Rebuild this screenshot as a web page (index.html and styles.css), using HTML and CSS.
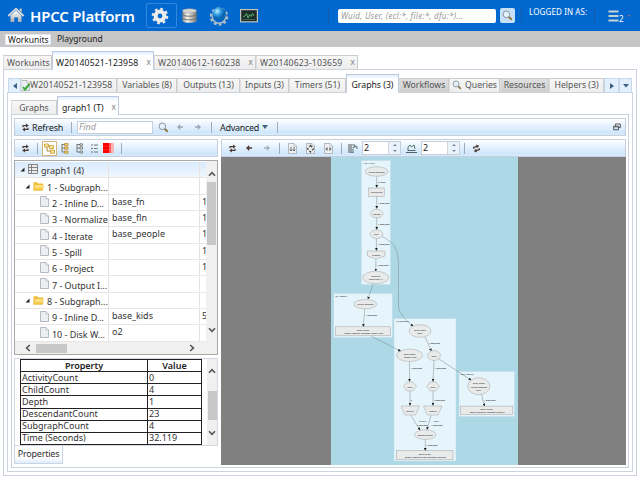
FILE: index.html
```
<!DOCTYPE html>
<html lang="en">
<head>
<meta charset="utf-8">
<title>HPCC Platform</title>
<link rel="stylesheet" href="styles.css">
</head>
<body>
<svg class="defs" width="0" height="0" aria-hidden="true">
  <defs>
    <linearGradient id="metal" x2="0" y2="1"><stop offset="0" stop-color="#fff"/><stop offset="1" stop-color="#a9adb0"/></linearGradient>
    <linearGradient id="cyl"><stop offset="0" stop-color="#888"/><stop offset=".35" stop-color="#f4f4f0"/><stop offset="1" stop-color="#777"/></linearGradient>
    <radialGradient id="ball" cx=".35" cy=".3"><stop offset="0" stop-color="#c5edff"/><stop offset=".5" stop-color="#3ba5e5"/><stop offset="1" stop-color="#0767b5"/></radialGradient>
    <linearGradient id="gold" x2="0" y2="1"><stop offset="0" stop-color="#fff0a0"/><stop offset="1" stop-color="#f3bd31"/></linearGradient>
    <marker id="arr" viewBox="0 0 4 4" refX="3.5" refY="2" markerWidth="2.8" markerHeight="2.8" markerUnits="userSpaceOnUse" orient="auto"><path d="M0 0L4 2L0 4z" fill="#222"/></marker>
    <symbol id="refresh" viewBox="0 0 9 9"><path d="M2 4.3V2.6H5.5M7 4.7V6.4H3.5" fill="none" stroke="#4b3a33" stroke-width="1.2"/><path d="M5 .6L7.8 2.6L5 4.4zM4 4.6L1.2 6.4L4 8.4z" fill="#4b3a33"/></symbol>
    <symbol id="lens" viewBox="0 0 11 11"><path d="M6.5 6.5L9.7 9.8" stroke="#8b7946" stroke-width="2"/><circle cx="4.4" cy="4.3" r="3.3" fill="#e3f0fb" stroke="#8b96a0"/></symbol>
    <symbol id="left" viewBox="0 0 8 8"><path d="M4.2 1L1 4L4.2 7V4.8H7V3.2H4.2z" fill="currentColor"/></symbol>
    <symbol id="right" viewBox="0 0 8 8"><path d="M3.8 1L7 4L3.8 7V4.8H1V3.2H3.8z" fill="currentColor"/></symbol>
    <symbol id="page" viewBox="0 0 9 11"><path d="M.5.5H6L8.5 3V10.5H.5z" fill="#eceef2" stroke="#a5abb2" stroke-width=".8"/><path d="M6 .5V3H8.5" fill="#fff" stroke="#a5abb2" stroke-width=".7"/></symbol>
    <symbol id="folder" viewBox="0 0 11 10"><path d="M.5 9V1.3H4.2L5.2 2.5H10V9z" fill="#f0bd3c"/><path d="M2 4H10.8L9.4 9.4H.5z" fill="url(#gold)" stroke="#eab640" stroke-width=".4"/></symbol>
    <symbol id="tri" viewBox="0 0 5 5"><path d="M4.5.5V4.5H.5z" fill="#222"/></symbol>
    <symbol id="up" viewBox="0 0 8 6"><path d="M1 4.8L4 1.6L7 4.8" fill="none" stroke="#555" stroke-width="1.6"/></symbol>
  </defs>
</svg>

<header class="top">
  <svg class="home" viewBox="0 0 17 17"><path d="M3 8.5L8.5 3.5L14 8.5V15H10.4V10.5H6.8V15H3z" fill="url(#metal)"/><path d="M.8 9L8.5 1.8L16.2 9" fill="none" stroke="#d7d7d7" stroke-width="1.8"/><path d="M12.2 1.5h2v4l-2-2z" fill="#ccc"/></svg>
  <h1>HPCC Platform</h1>
  <span class="gearbox"><svg width="18" height="18" viewBox="0 0 18 18"><circle cx="9" cy="9" r="7" fill="none" stroke="#e2e3e2" stroke-width="2.6" stroke-dasharray="2.75 2.75"/><circle cx="9" cy="9" r="4.4" fill="none" stroke="#ededeb" stroke-width="4"/></svg></span>
  <svg class="db" viewBox="0 0 17 17"><path d="M1 3v10.5c0 3 15 3 15 0V3z" fill="url(#cyl)"/><path d="M1 6.5c0 3 15 3 15 0M1 10.3c0 3 15 3 15 0" fill="none" stroke="#6f6f6b" stroke-width="1"/><ellipse cx="8.5" cy="3" rx="7.5" ry="2.3" fill="#d4d4d0" stroke="#999" stroke-width=".5"/></svg>
  <svg class="globe" viewBox="0 0 20 20"><circle cx="10" cy="10.5" r="8" fill="none" stroke="#aebbc4" stroke-width="2.6" stroke-dasharray="2.8 2.2"/><circle cx="10" cy="10.5" r="6.7" fill="none" stroke="#aebbc4" stroke-width="1.6"/><circle cx="10.2" cy="8" r="6.8" fill="url(#ball)"/></svg>
  <svg class="mon" viewBox="0 0 18 14"><rect x=".6" y=".6" width="16.8" height="12.2" fill="#1d2d29" stroke="#c2c4bd" stroke-width="1.2"/><path d="M3 8L5 7L6.5 4.5L8 9L9.5 5.5L11 7.5L12.5 4.5L14 7" fill="none" stroke="#5bbd73" stroke-width=".9"/><path d="M2.5 10.5H15" stroke="#64817a" stroke-width=".6"/></svg>
  <i class="hsep s1"></i>
  <span class="search">Wuid, User, (ecl:*, file:*, dfu:*)...</span>
  <span class="sbtn"><svg width="11" height="11"><use href="#lens"/></svg></span>
  <i class="hsep"></i>
  <span class="login">LOGGED IN AS:</span>
  <i class="hsep s3"></i>
  <svg class="burger" viewBox="0 0 11 12"><path d="M.5 1.5H10.5M.5 6H10.5M.5 10.5H10.5" stroke="#c9d2d8" stroke-width="2"/></svg>
  <span class="two">2</span><i class="caret"></i>
</header>
<nav class="subnav"><span class="on">Workunits</span><span>Playground</span></nav>

<div class="tabs t1">
  <span class="tab w48">Workunits</span>
  <span class="tab act w102">W20140521-123958<b>x</b></span>
  <span class="tab w102">W20140612-160238<b>x</b></span>
  <span class="tab w102">W20140623-103659<b>x</b></span>
</div>
<main class="frame f1">
  <div class="tabs t2">
    <span class="scroll w13"><svg width="4" height="6"><path d="M4 0V6L0 3z"/></svg></span>
    <span class="tab w96 wu"><svg width="9" height="11" viewBox="0 0 9 11"><use href="#page"/><path d="M2 7L4 9.5L8.5 4" fill="none" stroke="#34aa37" stroke-width="2"/></svg>W20140521-123958</span>
    <span class="tab w60">Variables (8)</span>
    <span class="tab w63">Outputs (13)</span>
    <span class="tab w49">Inputs (3)</span>
    <span class="tab w57">Timers (51)</span>
    <span class="tab act w53">Graphs (3)</span>
    <span class="tab dim w50">Workflows</span>
    <span class="tab w51"><svg class="ql" width="10" height="10"><use href="#lens"/></svg>Queries</span>
    <span class="tab dim w49">Resources</span>
    <span class="tab w55">Helpers (3)</span>
    <span class="scroll w15"><svg width="4" height="6"><path d="M0 0V6L4 3z"/></svg></span>
    <span class="scroll w13"><svg width="6" height="4"><path d="M0 0H6L3 3.5z"/></svg></span>
  </div>
  <div class="frame f2">
    <div class="tabs t3">
      <span class="tab w45">Graphs</span>
      <span class="tab act w62">graph1 (T)<b>x</b></span>
    </div>
    <div class="frame f3">
      <div class="bar main">
        <svg class="rf" width="9" height="9"><use href="#refresh"/></svg><span class="refresh">Refresh</span><i class="sep"></i>
        <span class="find">Find</span>
        <svg class="fl" width="11" height="11"><use href="#lens"/></svg>
        <svg class="al" width="8" height="8"><use href="#left"/></svg>
        <svg class="ar" width="8" height="8"><use href="#right"/></svg>
        <i class="sep"></i><span class="adv">Advanced</span><svg class="down" width="6" height="4"><path d="M0 0H6L3 4z"/></svg><i class="sep"></i>
        <svg class="win" width="8" height="8" viewBox="0 0 8 8"><path d="M2.5 2.8V1H7.3V4.5H5.8M.7 3.2H5.5V6.8H.7zM.7 3.8H5.5" fill="none" stroke="#555" stroke-width="1"/></svg>
      </div>
      <div class="cols">
        <section class="leftcol">
          <div class="bar lt">
            <svg class="rf" width="9" height="9"><use href="#refresh"/></svg><i class="sep"></i>
            <span class="sel"><svg width="11" height="11" viewBox="0 0 11 11"><path d="M3 3V8H7M3 3H6" fill="none" stroke="#aa8540"/><path d="M.5 1h4v3h-4zM5.5 2.5h4v3h-4zM6.5 7h4v3.3h-4z" fill="#ffe48a" stroke="#c39b3a" stroke-width=".8"/></svg></span>
            <svg class="ti" width="9" height="11" viewBox="0 0 9 11"><path d="M2 1V9H5M2 5H5M2 1.5H5" fill="none" stroke="#777"/><path d="M4.5.5h3.5v2.3H4.5zM4.5 4h3.5v2.3H4.5zM4.5 8h3.5v2.3H4.5z" fill="#f5cb62" stroke="#a98535" stroke-width=".7"/></svg>
            <svg class="ti" width="9" height="11" viewBox="0 0 9 11"><path d="M2 1V9H5M2 5H5M2 1.5H5" fill="none" stroke="#777"/><path d="M5 .8h2.5v2H5zM5 4h2.5v2H5zM5 8h2.5v2H5z" fill="#fff" stroke="#666" stroke-width=".8"/></svg>
            <svg class="ti" width="9" height="11" viewBox="0 0 9 11"><path d="M1 2H3M1 5.5H3M1 9H3M4 2H8M4 5.5H7.5M4 9H8" stroke="#777"/></svg>
            <svg class="red" width="11" height="11" viewBox="0 0 11 11"><path d="M0 0H6V10H0z" fill="red"/><path d="M6 0H8.5V10H6z" fill="#ff5a5a"/><path d="M8.5 0H11V10H8.5z" fill="#ffb3b3"/><path d="M0 3.4H11M0 6.8H11" stroke="#fff" stroke-opacity=".25" stroke-width=".5"/></svg>
            <i class="sep"></i>
          </div>
          <div class="tree">
            <div class="treebody">
              <div class="rows">
                <div class="row root"><span class="name"><svg class="tr" width="5" height="5"><use href="#tri"/></svg><svg class="sheet" width="10" height="10" viewBox="0 0 10 10"><path d="M.5.5H9.5V9.5H.5zM.5 3.5H9.5M.5 6.5H9.5M3.5.5V9.5" fill="#eee" stroke="#777" stroke-width=".9"/></svg>graph1 (4)</span><span class="lab"></span><span class="num"></span></div>
                <div class="row"><span class="name sub"><svg class="tr" width="5" height="5"><use href="#tri"/></svg><svg class="fo" width="11" height="10"><use href="#folder"/></svg>1 - Subgraph...</span><span class="lab"></span><span class="num"></span></div>
                <div class="row"><span class="name leaf"><svg width="9" height="11"><use href="#page"/></svg>2 - Inline D...</span><span class="lab">base_fn</span><span class="num">1</span></div>
                <div class="row"><span class="name leaf"><svg width="9" height="11"><use href="#page"/></svg>3 - Normalize</span><span class="lab">base_fln</span><span class="num">1</span></div>
                <div class="row"><span class="name leaf"><svg width="9" height="11"><use href="#page"/></svg>4 - Iterate</span><span class="lab">base_people</span><span class="num">1</span></div>
                <div class="row"><span class="name leaf"><svg width="9" height="11"><use href="#page"/></svg>5 - Spill</span><span class="lab"></span><span class="num">1</span></div>
                <div class="row"><span class="name leaf"><svg width="9" height="11"><use href="#page"/></svg>6 - Project</span><span class="lab"></span><span class="num">1</span></div>
                <div class="row"><span class="name leaf"><svg width="9" height="11"><use href="#page"/></svg>7 - Output I...</span><span class="lab"></span><span class="num"></span></div>
                <div class="row"><span class="name sub"><svg class="tr" width="5" height="5"><use href="#tri"/></svg><svg class="fo" width="11" height="10"><use href="#folder"/></svg>8 - Subgraph...</span><span class="lab"></span><span class="num"></span></div>
                <div class="row"><span class="name leaf"><svg width="9" height="11"><use href="#page"/></svg>9 - Inline D...</span><span class="lab">base_kids</span><span class="num">5</span></div>
                <div class="row"><span class="name leaf"><svg width="9" height="11"><use href="#page"/></svg>10 - Disk W...</span><span class="lab">o2</span><span class="num"></span></div>
              </div>
              <div class="vs"><svg width="8" height="6"><use href="#up"/></svg><i></i><svg class="dn" width="8" height="6"><use href="#up"/></svg></div>
            </div>
            <div class="hs"><svg class="lf" width="8" height="6"><use href="#up"/></svg><i></i><svg class="rt" width="8" height="6"><use href="#up"/></svg></div>
          </div>
          <div class="props">
            <table>
              <tr><th>Property</th><th>Value</th></tr>
              <tr><td>ActivityCount</td><td>0</td></tr>
              <tr><td>ChildCount</td><td>4</td></tr>
              <tr><td>Depth</td><td>1</td></tr>
              <tr><td>DescendantCount</td><td>23</td></tr>
              <tr><td>SubgraphCount</td><td>4</td></tr>
              <tr><td>Time (Seconds)</td><td>32.119</td></tr>
            </table>
            <div class="vs"><svg width="8" height="6"><use href="#up"/></svg><i></i><svg class="dn" width="8" height="6"><use href="#up"/></svg></div>
          </div>
          <span class="ptab">Properties</span>
        </section>
        <section class="rightcol">
          <div class="bar gt">
            <svg class="g1" width="9" height="9"><use href="#refresh"/></svg>
            <svg class="g2" width="8" height="8"><use href="#left"/></svg>
            <svg class="g3" width="8" height="8"><use href="#right"/></svg><i class="sep"></i>
            <svg class="g4" width="9" height="11" viewBox="0 0 9 11"><use href="#page"/><path d="M3 4V8M6 4V8M2 6.5L3 8L4 6.5M5 6.5L6 8L7 6.5" fill="none" stroke="#555" stroke-width=".8"/></svg>
            <svg class="g5" width="9" height="11" viewBox="0 0 9 11"><use href="#page"/><path d="M4.5 2.5L7.5 5.8L4.5 9L1.5 5.8z" fill="none" stroke="#444" stroke-width="1.2" stroke-dasharray="2.5 1.5"/></svg>
            <svg class="g5" width="9" height="11" viewBox="0 0 9 11"><use href="#page"/><path d="M3.5 4L1.5 6L3.5 8zM5.5 4L7.5 6L5.5 8z" fill="#555"/></svg><i class="sep"></i>
            <svg class="g6" width="10" height="11" viewBox="0 0 10 11"><path d="M1 1V10M3 1V10" stroke="#555"/><path d="M4 2H6.5V4.5M4.5 5L7 4M5 6V9.5H3M6.5 2.5L9 4V6" fill="none" stroke="#647a76" stroke-width="1.1"/></svg>
            <span class="spin">2<em><i></i><i class="d"></i></em></span>
            <svg class="g7" width="11" height="11" viewBox="0 0 11 11"><path d="M0 9.5H11M1.5 7.5H9.5" stroke="#54625f"/><path d="M2 7V4L4 2L5.5 4L8 2L9 6" fill="none" stroke="#54706a"/></svg>
            <span class="spin">2<em><i></i><i class="d"></i></em></span><i class="sep"></i>
            <svg class="g8" width="9" height="9"><use href="#refresh"/></svg>
          </div>
          <svg class="graph" width="404" height="308" viewBox="221.5 156.5 404 308">
            <rect x="331" y="156" width="187" height="309" fill="#add8e6"/>
            <g class="box"><rect x="361.3" y="160" width="29.2" height="124"/><rect x="333.8" y="293" width="58.5" height="44"/><rect x="394" y="318" width="62" height="142.5"/><rect x="459" y="371" width="55.5" height="45"/></g>
            <g class="node">
              <ellipse cx="376.5" cy="171" rx="11.5" ry="4.7"/><rect x="368.7" y="187.5" width="15.5" height="8.5"/><ellipse cx="376.7" cy="213" rx="6.3" ry="4.3"/><ellipse cx="376.5" cy="233.7" rx="6.3" ry="4.3"/><path d="M367.5 250.5H385V255.5L376 258.5L367.5 255.5z"/><ellipse cx="375.8" cy="277" rx="13" ry="6.2"/>
              <ellipse cx="365.3" cy="303.7" rx="11.5" ry="4.6"/><rect x="335.5" y="326.3" width="55" height="9"/>
              <ellipse cx="420" cy="330.5" rx="11" ry="6.3"/><ellipse cx="409.5" cy="354.8" rx="13" ry="6.2"/><ellipse cx="434" cy="355" rx="6.4" ry="5"/><path d="M403.5 386L407 381.5H413L416.5 386L413 390.3H407zM426.5 386L430 381.5H436L439.5 386L436 390.3H430zM401 405.5H419.5L415.5 414.5H405zM423.5 405.5H442L438 414.5H427.5z"/><ellipse cx="425.3" cy="434.2" rx="10.7" ry="4.8"/><rect x="396.3" y="450" width="56.7" height="9.3"/>
              <ellipse cx="478.8" cy="385.7" rx="11" ry="8.5"/><rect x="460.3" y="405.6" width="52.5" height="8.6"/>
            </g>
            <g class="edge"><path d="M376.7 176V187"/><path d="M376.7 196V208"/><path d="M376.7 217V229"/><path d="M376.4 238V250"/><path d="M375.8 259V270.5"/><path d="M373 283.5L368 298.5"/><path d="M364.8 308.5L363.3 326"/><path d="M371 335.5L400.5 350.5"/><path d="M382 236C395 242 398.5 250 398.5 265V307C400 314 406 320 413 325.5"/><path d="M425 336.5L431.3 350.5"/><path d="M409.5 361V381"/><path d="M434 360L433 381"/><path d="M410 390.5V405"/><path d="M433 390.5V405"/><path d="M411 415L420 429.5"/><path d="M431 415L427 429"/><path d="M425.3 439V450"/><path d="M439 358.5L471 379.5"/><path d="M481.5 394L484.5 405.5"/></g>
            <g class="tiny">
              <text x="363" y="163.3">1 (2.14Kb)</text><text x="335.5" y="296">8 (4.00Kb)</text><text x="396" y="321.2">12 (3.00Kb)</text><text x="460.5" y="374.2">20 (1.20Kb)</text>
              <text x="378" y="182.5">5 rows</text><text x="378" y="203.5">1,000,000</text><text x="378" y="224.2">1,000,000</text><text x="378" y="244.7">1,000,000</text><text x="377" y="265.7">1,000,000</text><text x="365.5" y="315.3">1,000,000</text><text x="428.5" y="343.8">1,000,000</text><text x="410.5" y="368.3">1,000,000</text><text x="434.5" y="368.3">1,000,000</text><text x="433.5" y="400.5">1,000,000</text><text x="410.8" y="400.5">5</text><text x="419" y="421.2">RIGHT</text><text x="416.5" y="425.2">1,000,000</text><text x="433.5" y="421.2">LEFT</text><text x="431" y="425.2">1,000,000</text><text x="426" y="445.8">1,000,000</text><text x="484" y="400.8">1,000,000</text>
              <g text-anchor="middle"><text x="376.5" y="172">Inline Dataset</text><text x="376.5" y="192.5">Normalize</text><text x="376.6" y="214">Iterate</text><text x="376.5" y="234.7">Spill</text><text x="376" y="255">Project</text><text x="376" y="276">Output</text><text x="376" y="279.5">Workunit #1</text><text x="365.3" y="304.7">Inline Dataset</text><text x="363" y="330">Disk Write</text><text x="363" y="333.3">~temp::people::dataset::base::kids</text><text x="420" y="330">Disk Read</text><text x="420" y="333.4">Spill</text><text x="409.5" y="354">Disk Read</text><text x="409.5" y="357.6">~temp::kids</text><text x="434" y="356">Sort</text><text x="410" y="387">Sort</text><text x="433" y="387">Sort</text><text x="410" y="411">Group</text><text x="433" y="411">Group</text><text x="425.3" y="435.2">Denormalize</text><text x="424.7" y="454">Disk Write</text><text x="424.7" y="457.4">~temp::people::kids::dataset::output</text><text x="478.8" y="383.5">Disk Read</text><text x="478.8" y="387">Inline Dataset</text><text x="478.8" y="390.3">Spill</text><text x="486.5" y="409.4">Disk Write</text><text x="486.5" y="412.6">~temp::people::dataset::output</text></g>
            </g>
          </svg>
        </section>
      </div>
    </div>
  </div>
</main>
</body>
</html>
```
FILE: styles.css
```
* { box-sizing: border-box; }
html, body { margin: 0; height: 480px; overflow: hidden; }
body { background: #fff; font-family: "Noto Sans", "Open Sans", sans-serif; font-size: 9px; color: #333; display: flex; flex-direction: column; white-space: nowrap; }
svg { display: block; flex: none; }
i, em, b { font-style: normal; font-weight: normal; }
.defs { position: absolute; }

.top { height: 31px; flex: none; background: #0168cf; display: flex; align-items: center; color: #fff; padding-left: 7px; }
.home { width: 18px; height: 17px; }
.top h1 { margin: 0 0 0 5px; font-size: 15px; line-height: 20px; font-weight: 600; width: 108px; flex: none; letter-spacing: -.2px; }
.gearbox { margin-left: 8px; width: 31px; height: 25px; border: 1px solid #3287dc; border-radius: 2px; display: flex; align-items: center; justify-content: center; padding-right: 4px; flex: none; }
.db { width: 17px; height: 16px; margin-left: 4px; }
.globe { width: 20px; height: 20px; margin-left: 11px; }
.mon { width: 18px; height: 14px; margin-left: 11px; }
.hsep { width: 1px; height: 15px; background: #1659a8; flex: none; margin-left: 6px; }
.hsep.s1 { margin-left: 70px; }
.hsep.s3 { margin-left: 4px; }
.search { margin-left: 9px; width: 158px; height: 14px; background: #fff; border-radius: 2px; color: #999; font-style: italic; font-size: 8px; line-height: 13px; padding-left: 3px; letter-spacing: .28px; flex: none; }
.sbtn { margin-left: 4px; width: 15px; height: 15px; background: #c8e0f7; border-radius: 2px; display: flex; align-items: center; justify-content: center; flex: none; }
.login { margin: 0 0 8px 7px; width: 61px; font-size: 8px; letter-spacing: .12px; flex: none; }
.burger { width: 11px; height: 12px; margin-left: 13px; }
.two { font-size: 8px; margin: 7px 0 0 0; line-height: 10px; }
.caret { border: 2px solid transparent; border-top-color: #7b6b89; border-bottom: 0; margin-left: 3px; }
.subnav { height: 16px; flex: none; background: #c6c6c6; display: flex; align-items: center; padding-left: 5px; color: #222; font-size: 8.5px; }
.subnav span { width: 46px; height: 11px; line-height: 10px; padding-left: 3px; margin-right: 3px; letter-spacing: -.03px; }
.subnav .on { background: #fff; border: 1px solid #e5e5f5; padding-left: 2px; border-radius: 1px; }

.tabs { display: flex; align-items: flex-end; flex: none; position: relative; margin-bottom: -1px; }
.tab { height: 15px; border: 1px solid #ccc; border-left-color: #ddd; border-bottom-color: #cdd3dc; background: linear-gradient(#f7f7f7, #ededed); color: #555; display: flex; align-items: center; justify-content: center; flex: none; line-height: 12px; overflow: hidden; font-size: 8.7px; }
.t2 .tab { padding-bottom: 1px; }
.tab.act { height: 19px; background: linear-gradient(#dfeefd 0, #fff 4px); border: 1px solid #bdc9df; border-bottom: 0; color: #222; padding-top: 3px; }
.tab.dim { background: linear-gradient(#dfdfdf, #cfcfcf); }
.tab b { margin-left: auto; margin-right: 2px; font: 8px/10px "DejaVu Sans", sans-serif; color: #888; }
.t1 { margin: 4px 3px -1px; }
.t1 .tab, .wu { letter-spacing: .12px; }
.t1 .tab { justify-content: flex-start; padding-left: 3px; }
.w48 { width: 49px; } .w102 { width: 102px; } .w13 { width: 13px; } .w96 { width: 96px; } .w60 { width: 60px; } .w63 { width: 63px; } .w49 { width: 49px; } .w57 { width: 57px; } .w53 { width: 53px; } .w50 { width: 50px; } .w51 { width: 51px; } .w55 { width: 55px; } .w15 { width: 15px; } .w45 { width: 46px; } .w62 { width: 62px; }
.tab.wu { justify-content: flex-start; }
.wu svg { margin: 0 0 0 -1px; }
.ql { margin-right: 3px; }
.scroll { height: 15px; background: #e2f0fd; border: 1px solid #c9d8ea; display: flex; align-items: center; justify-content: center; flex: none; }
.scroll svg { fill: #3f6187; }
.t3 .act { padding-left: 4px; }

.frame { border: 1px solid #cbd2e0; flex: 1; min-height: 0; display: flex; flex-direction: column; }
.f1 { margin: 0 3px 4px; padding: 4px 3px 3px; }
.f1 > .t2 { margin-left: 1px; }
.f2 { padding: 3px; }
.f3 { padding: 3px 3px 3px 2px; }

.bar { background: linear-gradient(#fff 0, #e9f4fe 35%, #cfe6fb 85%, #d8ebfc); border: 1px solid #c5cfdd; display: flex; align-items: center; height: 18px; flex: none; color: #222; }
.sep { width: 1px; height: 11px; background: #9eacb9; flex: none; }
.main { font-size: 9px; width: 612px; }
.rf { margin-left: 6px; }
.refresh { margin-left: 2px; width: 32px; letter-spacing: -.15px; }
.refresh + .sep { margin-left: 7px; }
.find { margin-left: 5px; width: 76px; height: 13px; background: #fff; border: 1px solid #c5cfdd; color: #999; font-style: italic; padding-left: 1px; line-height: 10px; }
.fl { margin-left: 5px; }
.al { margin-left: 7px; color: #9aa7b5; }
.ar { margin-left: 10px; color: #9aa7b5; }
.ar + .sep { margin-left: 9px; }
.adv { margin-left: 8px; width: 38px; letter-spacing: -.3px; }
.down { margin-left: 4px; fill: #42647e; }
.down + .sep { margin-left: 9px; }
.win { margin-left: auto; margin-right: 4px; }
.cols { display: flex; margin-top: 3px; flex: 1; min-height: 0; }
.leftcol { width: 204px; margin-right: 3px; display: flex; flex-direction: column; align-items: stretch; flex: none; }
.rightcol { width: 405px; flex: none; }
.lt .sep { margin-left: 7px; }
.sel { width: 15px; height: 15px; margin-left: 4px; background: #fff; border: 1px solid #d4b47a; display: flex; align-items: center; justify-content: center; }
.ti { margin-left: 6px; }
.sel + .ti { margin-left: 3px; }
.red { margin-left: 4px; }

.tree { margin-top: 3px; height: 195px; border: 1px solid #a9a9a9; display: flex; flex-direction: column; flex: none; }
.treebody { display: flex; height: 181px; flex: none; }
.rows { width: 191px; overflow: hidden; padding-top: 1px; flex: none; }
.row { display: flex; height: 16.35px; border-bottom: 1px solid #ebe6e3; }
.root { background: linear-gradient(#d9ebfc, #eef6fe); width: 202px; }
.name { width: 94px; border-right: 1px solid #e6e2e0; display: flex; align-items: center; padding: 2px 0 0 5px; flex: none; letter-spacing: -.03px; }
.sub { padding-left: 10px; }
.leaf { padding-left: 25px; }
.leaf svg { margin: -3px 3px 0 0; }
.fo { margin: -2px 3px 0 3px; }
.sheet { margin: -3px 3px 0 3px; }
.tr { margin-top: -2px; }
.lab { width: 91px; padding-left: 3px; line-height: 13px; border-right: 1px solid #e6e2e0; flex: none; }
.num { padding-left: 2px; line-height: 13px; }
.vs { width: 11px; background: #f0f0f0; display: flex; flex-direction: column; align-items: center; flex: none; padding-top: 10px; }
.tree .vs { margin-top: 0; }
.vs i { width: 9px; background: #c8c8c8; height: 63px; margin-top: 5px; }
.dn { margin-top: auto; margin-bottom: 9px; transform: rotate(180deg); }
.hs { height: 12px; background: #f0f0f0; display: flex; align-items: center; }
.lf { margin-left: 9px; transform: rotate(-90deg); }
.rt { margin-left: auto; margin-right: 21px; transform: rotate(90deg); }
.hs i { width: 31px; height: 9px; background: #c8c8c8; margin-left: 4px; }
.props { margin-top: 3px; height: 88px; border: 1px solid #d3d8e2; padding: 0 0 0 5px; display: flex; flex: none; }
table { border-collapse: collapse; width: 182px; height: 86px; font-size: 9px; line-height: 10px; color: #333; table-layout: fixed; }
th, td { border: 1px solid #222; padding: 0 0 0 1px; height: 12px; }
th { padding: 0; color: #222; font-weight: 600; }
th:first-child { width: 127px; }
.props .vs { margin: 0 0 0 auto; padding-top: 9px; width: 10px; }
.props .vs i { height: 29px; margin-top: 17px; }
.ptab { width: 49px; height: 20px; border: 1px solid #c9d4e5; border-top: 0; background: linear-gradient(#fff 70%, #dcebfb); line-height: 15px; text-align: center; letter-spacing: -.22px; }

.gt .g1 { margin-left: 6px; }
.g2 { margin-left: 8px; color: #4b3a33; }
.g3 { margin-left: 10px; color: #a5b0bb; }
.g3 + .sep { margin-left: 8px; }
.g4 { margin-left: 8px; }
.g5 { margin-left: 9px; }
.g5 + .sep { margin-left: 8px; }
.g6 { margin-left: 6px; }
.g7 { margin-left: 4px; }
.g8 { margin-left: 7px; transform: rotate(-15deg); }
.spin { margin-left: 4px; width: 39px; height: 14px; background: #fff; border: 1px solid #c2cfdd; display: flex; padding-left: 1px; line-height: 12px; font-size: 9px; }
.spin em { margin-left: auto; width: 12px; background: #eaf2fc; border-left: 1px solid #d3d3dc; display: flex; flex-direction: column; align-items: center; justify-content: space-around; }
.spin em i { border: 2px solid transparent; border-bottom-color: #7889a0; border-top: 0; }
.spin em .d { border-top: 2px solid #7889a0; border-bottom: 0; }
.spin + .g7 { margin-left: 5px; }
.spin + .sep { margin-left: 4px; }
.graph { width: 405px; height: 308px; background: #808080; }
.box rect { fill: #e6f5fb; stroke: #c3dce6; stroke-width: .5; }
.node * { fill: #e9ebeb; stroke: #a2a2a2; stroke-width: .5; }
.edge path { fill: none; stroke: #7d898e; stroke-width: .5; marker-end: url(#arr); }
.tiny { font-size: 2.5px; fill: #111; }
```
